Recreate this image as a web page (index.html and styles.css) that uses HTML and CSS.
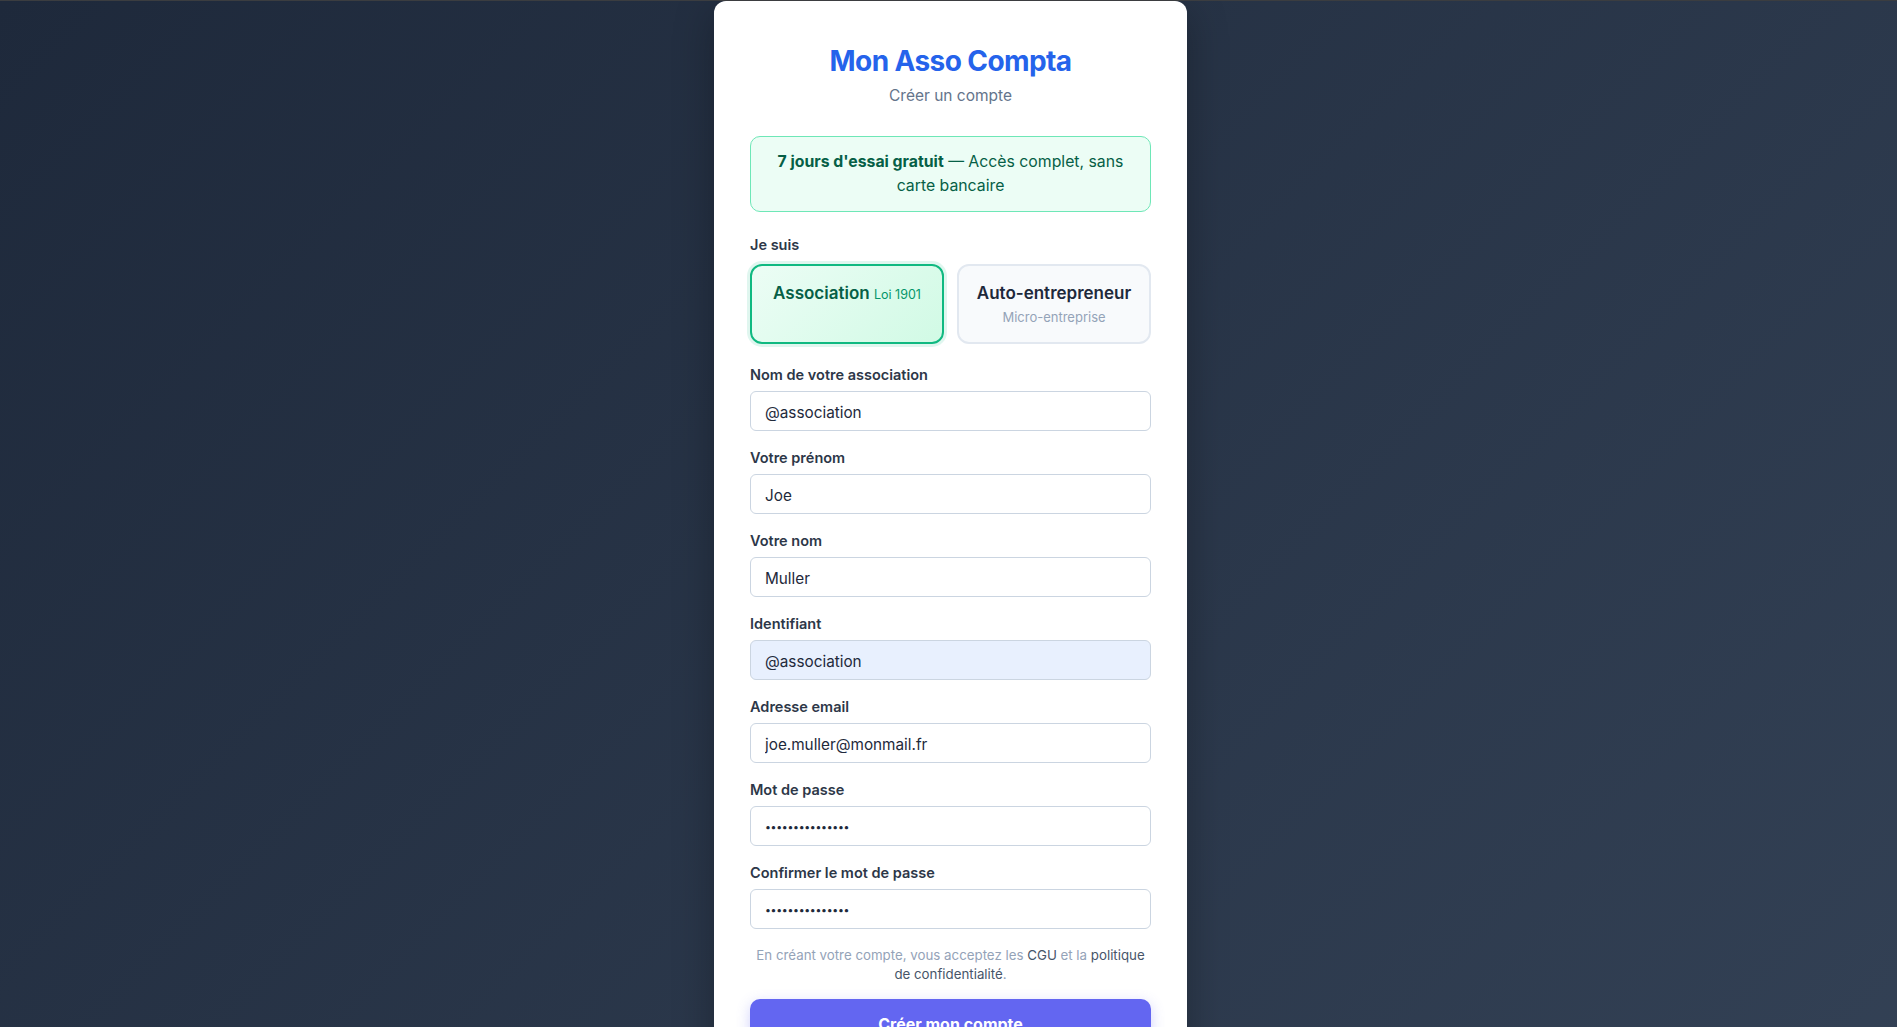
FILE: index.html
```html
<!DOCTYPE html>
<html lang="fr">
  <head>
    <meta charset="UTF-8" />
    <meta name="viewport" content="width=device-width, initial-scale=1.0" />
    <title>Mon Asso Compta - Créer un compte</title>
    <link rel="stylesheet" href="styles.css">
  </head>
  <body>
    <div class="container">
      <h1 class="brand">Mon Asso Compta</h1>
      <p class="subtitle">Créer un compte</p>

      <div class="trial-banner">
        <strong>7 jours d'essai gratuit</strong> — Accès complet, sans carte bancaire
      </div>

      <form id="signupForm">
        <div class="form-group type-group">
          <label class="type-label">Je suis</label>
          <div class="account-types">
            <button type="button" class="type-option active" onclick="selectType(this)">
              <span class="type-title">Association <small>Loi 1901</small></span>
            </button>
            <button type="button" class="type-option" onclick="selectType(this)">
              <span class="type-title">Auto-entrepreneur</span>
              <span class="type-sub">Micro-entreprise</span>
            </button>
          </div>
        </div>

        <div class="form-group">
          <label for="orgName">Nom de votre association</label>
          <input type="text" id="orgName" name="orgName" value="@association" />
        </div>
        <div class="form-group">
          <label for="firstname">Votre prénom</label>
          <input type="text" id="firstname" name="firstname" value="Joe" />
        </div>
        <div class="form-group">
          <label for="lastname">Votre nom</label>
          <input type="text" id="lastname" name="lastname" value="Muller" />
        </div>
        <div class="form-group">
          <label for="username">Identifiant</label>
          <input type="text" id="username" name="username" class="autofilled" value="@association" />
        </div>
        <div class="form-group">
          <label for="email">Adresse email</label>
          <input type="email" id="email" name="email" value="joe.muller@monmail.fr" />
        </div>
        <div class="form-group">
          <label for="password">Mot de passe</label>
          <input type="password" id="password" name="password" value="motdepasse12345" />
        </div>
        <div class="form-group">
          <label for="confirm">Confirmer le mot de passe</label>
          <input type="password" id="confirm" name="confirm" value="motdepasse12345" />
        </div>

        <p class="terms">
          En créant votre compte, vous acceptez les <a href="#">CGU</a> et la
          <a href="#">politique de confidentialité</a>.
        </p>

        <button type="submit" class="submit-btn">Créer mon compte</button>
        <div class="login-link">Déjà un compte ? <a href="#">Se connecter</a></div>
      </form>
    </div>

    <script>
      function selectType(btn) {
        document.querySelectorAll(".type-option").forEach(function (el) {
          el.classList.remove("active");
        });
        btn.classList.add("active");
      }

      document.getElementById("signupForm").addEventListener("submit", function (event) {
        event.preventDefault();
      });
    </script>
  </body>
</html>
```

FILE: styles.css
```css
body {
  font-family: Inter, "Noto Sans", Arial, sans-serif;
  margin: 0;
  padding: 0 0 0 4px;
  min-height: 100vh;
  background: linear-gradient(135deg, #1e293b 0%, #334155 100%);
  border-top: 1px solid #3b3d40;
  color: #334155;
  display: flex;
  justify-content: center;
  align-items: flex-start;
}

.container {
  width: 473px;
  box-sizing: border-box;
  background: #fff;
  padding: 44px 36px 36px;
  border-radius: 12px;
  box-shadow: 0 10px 40px rgba(0, 0, 0, 0.28);
}

.brand {
  margin: 0;
  text-align: center;
  font-size: 28px;
  line-height: 1.2;
  font-weight: 700;
  color: #2563eb;
  letter-spacing: -0.6px;
}

.subtitle {
  margin: 6px 0 0;
  text-align: center;
  font-size: 15.5px;
  line-height: 22px;
  color: #64748b;
}

.trial-banner {
  margin-top: 29px;
  padding: 13px 20px;
  background: #ecfdf5;
  border: 1px solid #6ee7b7;
  border-radius: 10px;
  text-align: center;
  font-size: 15.8px;
  line-height: 24px;
  color: #065f46;
}

.trial-banner strong {
  font-weight: 700;
}

form {
  margin-top: 23px;
}

.form-group {
  margin-bottom: 17px;
}

label {
  display: block;
  margin-bottom: 6px;
  font-size: 14.5px;
  line-height: 20px;
  font-weight: 600;
  color: #2d3748;
}

.type-group {
  margin-bottom: 21px;
}

.type-label {
  margin-bottom: 9px;
}

.account-types {
  display: grid;
  grid-template-columns: 1fr 1fr;
  gap: 13px;
}

.type-option {
  display: flex;
  flex-direction: column;
  align-items: center;
  padding: 16px 8px;
  border: 2px solid #e2e8f0;
  border-radius: 12px;
  background: #f8fafc;
  font-family: inherit;
  cursor: pointer;
  text-align: center;
}

.type-option.active {
  border-color: #10b981;
  background: linear-gradient(135deg, #ecfdf5 0%, #d1fae5 100%);
  box-shadow: 0 0 0 3px rgba(16, 185, 129, 0.13);
}

.type-title {
  font-size: 17px;
  line-height: 22px;
  font-weight: 600;
  color: #1e293b;
}

.type-option.active .type-title {
  color: #065f46;
}

.type-title small {
  font-size: 12.5px;
  font-weight: 400;
  color: #059669;
}

.type-sub {
  margin-top: 4px;
  font-size: 13px;
  line-height: 18px;
  color: #94a3b8;
}

input {
  width: 100%;
  height: 40px;
  padding: 4px 14px 0;
  border: 1px solid #cbd5e1;
  border-radius: 6px;
  box-sizing: border-box;
  font-family: inherit;
  font-size: 15.3px;
  color: #1e293b;
  background: #fff;
}

input:focus {
  border-color: #6366f1;
  outline: none;
}

input.autofilled {
  background: #e8f0fe;
}

input[type="password"] {
  font-size: 10.5px;
  letter-spacing: -0.3px;
}

.terms {
  margin: 2px 0 15px;
  padding: 0 4px;
  text-align: center;
  font-size: 13.3px;
  line-height: 19px;
  color: #94a3b8;
}

.terms a {
  color: #475569;
  text-decoration: none;
}

.submit-btn {
  width: 100%;
  padding: 15px;
  border: none;
  border-radius: 10px;
  background: #6366f1;
  color: #fff;
  font-family: inherit;
  font-size: 16px;
  font-weight: 700;
  cursor: pointer;
  box-shadow: 0 4px 14px rgba(99, 102, 241, 0.3);
}

.submit-btn:hover {
  background: #4f46e5;
}

.login-link {
  margin-top: 18px;
  text-align: center;
  font-size: 14px;
  color: #64748b;
}

.login-link a {
  color: #6366f1;
  text-decoration: none;
  font-weight: 600;
}
```
